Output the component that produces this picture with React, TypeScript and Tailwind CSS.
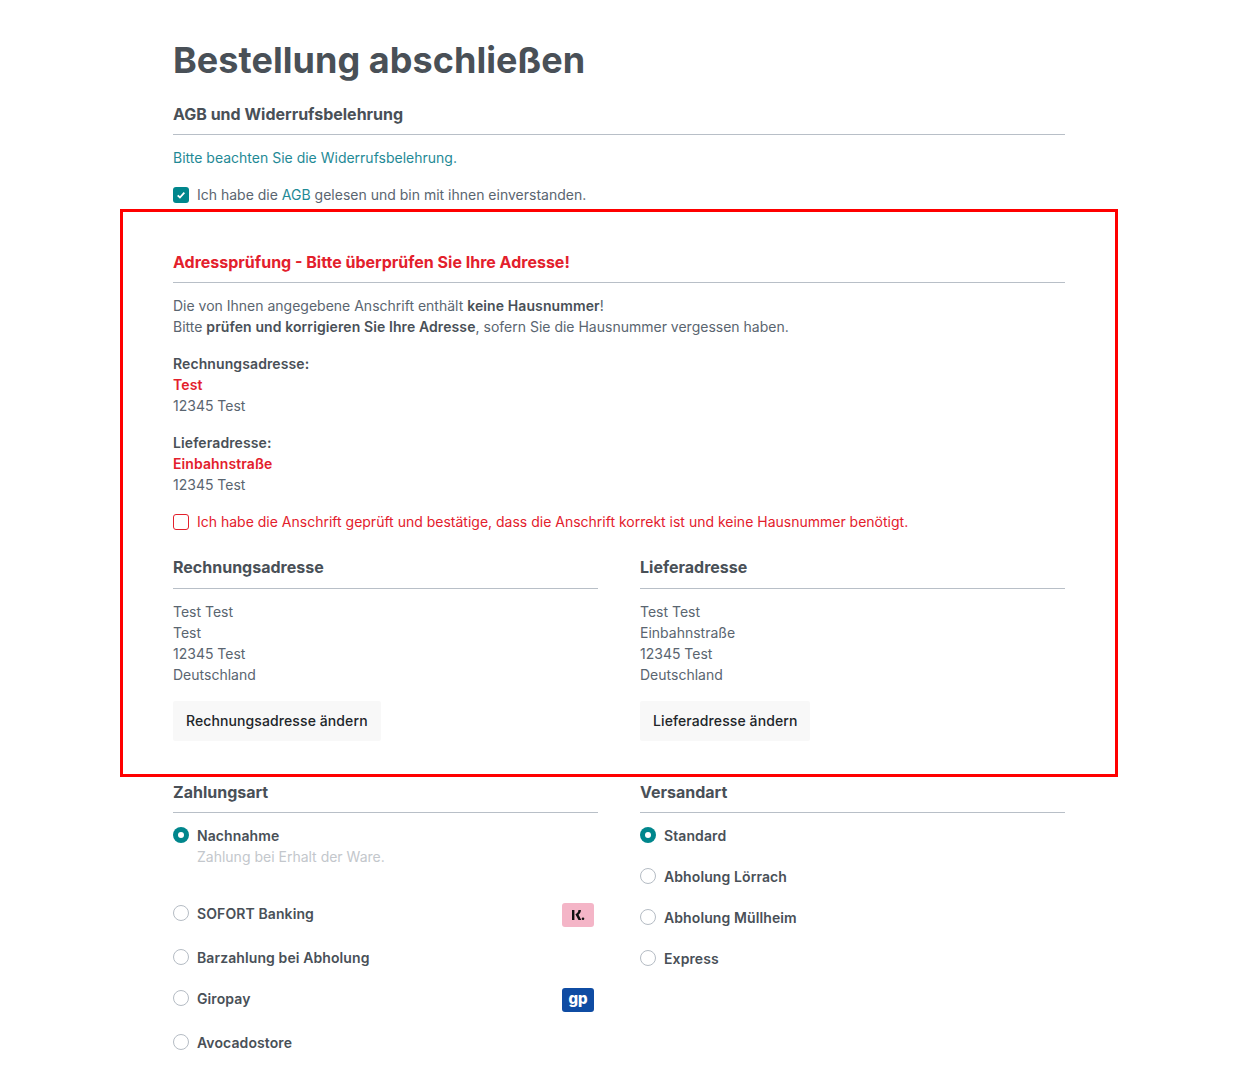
const headingClass = "text-[16px] leading-[25px] font-bold text-[#495057] border-b border-[#b8bfc7]";

function Heading({ children, className = "" }: { children: React.ReactNode; className?: string }) {
  return <h2 className={`${headingClass} pb-[7px] ${className}`}>{children}</h2>;
}

function Radio({ checked = false }: { checked?: boolean }) {
  if (checked) {
    return (
      <span className="w-4 h-4 -translate-y-px rounded-full bg-[#00868c] flex items-center justify-center shrink-0">
        <span className="w-1.5 h-1.5 rounded-full bg-white" />
      </span>
    );
  }
  return <span className="w-4 h-4 -translate-y-px rounded-full border border-[#b5bcc4] bg-white shrink-0" />;
}

function Option({
  label,
  checked,
  className = "",
  children,
}: {
  label: string;
  checked?: boolean;
  className?: string;
  children?: React.ReactNode;
}) {
  return (
    <div className={`flex items-center gap-2 h-[21px] ${className}`}>
      <Radio checked={checked} />
      <span className="font-semibold tracking-[0.1px] text-[#495057]">{label}</span>
      {children}
    </div>
  );
}

function AddressColumn({ title, lines, button }: { title: string; lines: string[]; button: string }) {
  return (
    <div>
      <Heading className="!pb-[8px]">{title}</Heading>
      <div className="mt-[12px]">
        {lines.map((l, i) => (
          <div key={i}>{l}</div>
        ))}
      </div>
      <button className="mt-[16px] h-10 px-[13px] pb-[2px] bg-[#f8f8f8] rounded-[2px] font-medium tracking-[0.1px] text-[#212529]">{button}</button>
    </div>
  );
}

function Strong({ children, red = false }: { children: React.ReactNode; red?: boolean }) {
  return <b className={`font-semibold tracking-[0.1px] ${red ? "text-[#e3202c]" : "text-[#495057]"}`}>{children}</b>;
}

export default function App() {
  return (
    <div className="bg-white min-h-[1083px] text-[14px] leading-[21px] text-[#5a6570] font-['Inter',sans-serif] overflow-hidden">
      <div className="w-[892px] ml-[173px] pt-[37px]">
        <h1 className="text-[36px] leading-[46px] font-bold tracking-[0.05px] text-[#495057]">Bestellung abschließen</h1>
        <Heading className="mt-[19px]">AGB und Widerrufsbelehrung</Heading>
        <p className="mt-[12px] text-[#1f8a96]">Bitte beachten Sie die Widerrufsbelehrung.</p>
        <div className="flex items-center gap-2 mt-[16px]">
          <span className="w-4 h-4 rounded-[3px] bg-[#00868c] flex items-center justify-center">
            <svg viewBox="0 0 12 12" className="w-[10px] h-[10px]" fill="none" stroke="white" strokeWidth="2.2">
              <path d="M2 6.5l2.7 2.5L10 3.2" />
            </svg>
          </span>
          <span>
            Ich habe die <span className="text-[#1f8a96]">AGB</span> gelesen und bin mit ihnen einverstanden.
          </span>
        </div>

        <div className="border-[3px] border-[#ff0000] w-[998px] -ml-[53px] mt-[4px] pl-[50px] pr-[50px] pt-[38px] h-[568px]">
          <div className="w-[892px]">
            <Heading className="!text-[#e3202c]">Adressprüfung - Bitte überprüfen Sie Ihre Adresse!</Heading>
            <p className="mt-[12px]">
              Die von Ihnen angegebene Anschrift enthält <Strong>keine Hausnummer</Strong>!
              <br />
              Bitte <Strong>prüfen und korrigieren Sie Ihre Adresse</Strong>, sofern Sie die Hausnummer vergessen haben.
            </p>
            <p className="mt-4">
              <Strong>Rechnungsadresse:</Strong>
              <br />
              <Strong red>Test</Strong>
              <br />
              12345 Test
            </p>
            <p className="mt-4">
              <Strong>Lieferadresse:</Strong>
              <br />
              <Strong red>Einbahnstraße</Strong>
              <br />
              12345 Test
            </p>
            <div className="flex items-center gap-2 mt-4 text-[#e3202c]">
              <span className="w-4 h-4 rounded-[3px] border border-[#e3202c] bg-white" />
              <span>Ich habe die Anschrift geprüft und bestätige, dass die Anschrift korrekt ist und keine Hausnummer benötigt.</span>
            </div>
            <div className="grid grid-cols-2 gap-x-[42px] mt-[23px]">
              <AddressColumn title="Rechnungsadresse" lines={["Test Test", "Test", "12345 Test", "Deutschland"]} button="Rechnungsadresse ändern" />
              <AddressColumn title="Lieferadresse" lines={["Test Test", "Einbahnstraße", "12345 Test", "Deutschland"]} button="Lieferadresse ändern" />
            </div>
          </div>
        </div>

        <div className="grid grid-cols-2 gap-x-[42px] mt-[3px]">
          <div>
            <Heading>Zahlungsart</Heading>
            <Option label="Nachnahme" checked className="mt-[12px]" />
            <p className="ml-6 text-[#c3c7cc]">Zahlung bei Erhalt der Ware.</p>
            <Option label="SOFORT Banking" className="mt-[36px] relative">
              <span className="absolute right-1 top-0 w-8 h-6 rounded-[3px] bg-[#f4b5c7] flex items-center justify-center">
                <svg viewBox="0 0 14 12" className="w-[14px] h-3" fill="#111">
                  <rect x="1" y="1" width="2.4" height="10" />
                  <path d="M7.4 1h2.5c0 2-.9 3.7-2.4 4.8L10.300 11H7.500L4.400 5.300C6.200 4.500 7.400 3 7.400 1Z" />
                  <circle cx="12" cy="9.800" r="1.300" />
                </svg>
              </span>
            </Option>
            <Option label="Barzahlung bei Abholung" className="mt-[23px]" />
            <Option label="Giropay" className="mt-[20px] relative">
              <span className="absolute right-1 top-0 w-8 h-6 rounded-[3px] bg-[#0f4ca3] flex items-center justify-center text-[15px] leading-none pb-[3px] font-extrabold text-white">gp</span>
            </Option>
            <Option label="Avocadostore" className="mt-[23px]" />
          </div>
          <div>
            <Heading>Versandart</Heading>
            <Option label="Standard" checked className="mt-[12px]" />
            <Option label="Abholung Lörrach" className="mt-[20px]" />
            <Option label="Abholung Müllheim" className="mt-[20px]" />
            <Option label="Express" className="mt-[20px]" />
          </div>
        </div>
      </div>
    </div>
  );
}
